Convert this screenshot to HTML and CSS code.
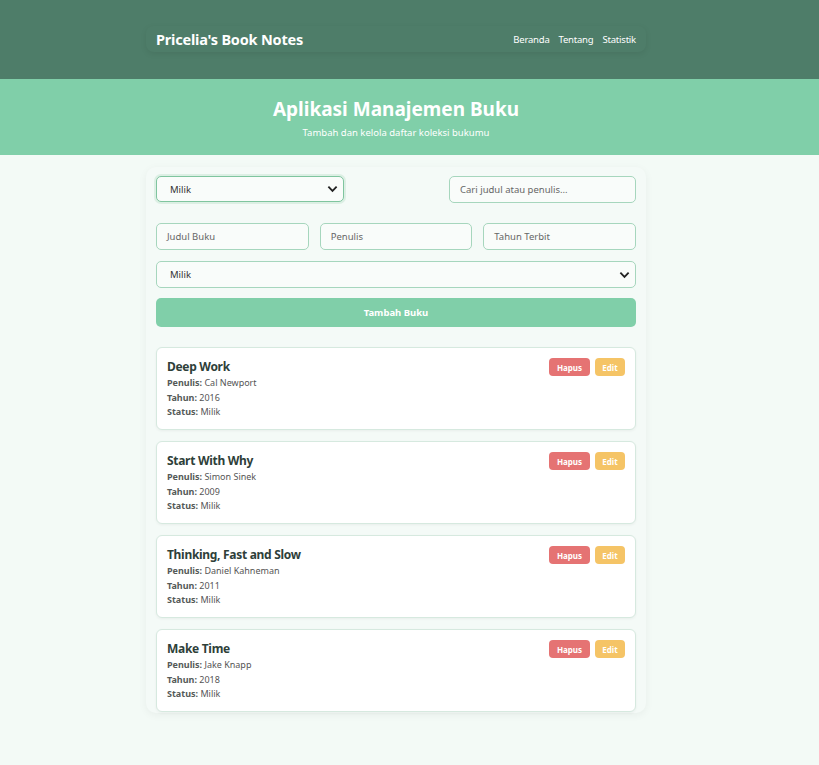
FILE: index.html
```html
<!DOCTYPE html>
<html lang="id">
<head>
<meta charset="utf-8">
<title>Pricelia's Book Notes</title>
<link rel="stylesheet" href="styles.css">
</head>
<body>
<header class="topbar">
  <div class="wrap">
    <nav class="nav">
      <span class="brand">Pricelia's Book Notes</span>
      <div class="links">
        <a href="#">Beranda</a>
        <a href="#">Tentang</a>
        <a href="#">Statistik</a>
      </div>
    </nav>
  </div>
</header>
<section class="hero">
  <h1>Aplikasi Manajemen Buku</h1>
  <p>Tambah dan kelola daftar koleksi bukumu</p>
</section>
<main class="wrap">
  <div class="panel">
    <div class="filters">
      <div class="select focus">Milik<svg viewBox="0 0 12 8" class="chev"><path d="M1.5 1.5 6 6l4.5-4.5" fill="none" stroke="#222" stroke-width="2"/></svg></div>
      <div class="input search">Cari judul atau penulis...</div>
    </div>
    <div class="form-row">
      <div class="input">Judul Buku</div>
      <div class="input">Penulis</div>
      <div class="input">Tahun Terbit</div>
    </div>
    <div class="select full">Milik<svg viewBox="0 0 12 8" class="chev"><path d="M1.5 1.5 6 6l4.5-4.5" fill="none" stroke="#222" stroke-width="2"/></svg></div>
    <button class="add">Tambah Buku</button>
    <div class="list">
      <div class="card">
        <div class="info">
          <h3>Deep Work</h3>
          <p><b>Penulis:</b> Cal Newport</p>
          <p><b>Tahun:</b> 2016</p>
          <p><b>Status:</b> Milik</p>
        </div>
        <div class="actions"><span class="btn del">Hapus</span><span class="btn edit">Edit</span></div>
      </div>
      <div class="card">
        <div class="info">
          <h3>Start With Why</h3>
          <p><b>Penulis:</b> Simon Sinek</p>
          <p><b>Tahun:</b> 2009</p>
          <p><b>Status:</b> Milik</p>
        </div>
        <div class="actions"><span class="btn del">Hapus</span><span class="btn edit">Edit</span></div>
      </div>
      <div class="card">
        <div class="info">
          <h3>Thinking, Fast and Slow</h3>
          <p><b>Penulis:</b> Daniel Kahneman</p>
          <p><b>Tahun:</b> 2011</p>
          <p><b>Status:</b> Milik</p>
        </div>
        <div class="actions"><span class="btn del">Hapus</span><span class="btn edit">Edit</span></div>
      </div>
      <div class="card">
        <div class="info">
          <h3>Make Time</h3>
          <p><b>Penulis:</b> Jake Knapp</p>
          <p><b>Tahun:</b> 2018</p>
          <p><b>Status:</b> Milik</p>
        </div>
        <div class="actions"><span class="btn del">Hapus</span><span class="btn edit">Edit</span></div>
      </div>
    </div>
  </div>
</main>
</body>
</html>
```
FILE: styles.css
```css
* { box-sizing: border-box; }
html, body { margin: 0; }
body {
  background: #f3faf6;
  font-family: "Noto Sans", "Open Sans", sans-serif;
  color: #333;
  padding-right: 27px;
  min-height: 765px;
}
.topbar {
  background: #4e7d69;
  height: 79px;
  padding-top: 26px;
  margin-right: -27px;
  padding-right: 27px;
}
.wrap { width: 500px; margin: 0 auto; }
.nav {
  display: flex;
  justify-content: space-between;
  align-items: center;
  padding: 3px 10px;
  border-radius: 8px;
  box-shadow: 0 2px 6px rgba(0,0,0,0.08);
  height: 26px;
}
.brand { color: #fff; font-weight: 700; font-size: 14.5px; letter-spacing: -0.2px; }
.links { display: flex; gap: 9px; }
.links a { color: #fff; text-decoration: none; font-size: 9.5px; letter-spacing: -0.2px; }
.hero {
  background: #80cfa9;
  height: 76px;
  text-align: center;
  color: #fff;
  padding-top: 16px;
  margin-right: -27px;
  padding-right: 27px;
}
.hero h1 { margin: 0; font-size: 19px; font-weight: 700; line-height: 28px; }
.hero p { margin: 4px 0 0; font-size: 9.5px; line-height: 12px; }
main { padding-top: 12px; }
.panel {
  background: #f4faf7;
  border-radius: 10px;
  box-shadow: 0 2px 8px rgba(0,0,0,0.05);
  padding: 9px 10px 1px;
}
.filters { display: flex; justify-content: space-between; margin-bottom: 20px; }
.select, .input {
  height: 27px;
  border: 1px solid #a6d6bd;
  border-radius: 5px;
  background: #f9fcfa;
  font-size: 9.5px;
  display: flex;
  align-items: center;
  padding: 0 10px;
  color: #666;
}
.select { justify-content: space-between; color: #333; padding: 0 5px 0 13px; }
.select.focus {
  width: 188px;
  height: 26px;
  border-color: #7fc59f;
  box-shadow: 0 0 0 2px #dcefe4;
}
.chev { width: 11px; height: 8px; }
.search { width: 187px; }
.form-row { display: flex; gap: 11px; margin-bottom: 11px; }
.form-row .input { flex: 1; }
.select.full { margin-bottom: 10px; }
.add {
  display: block;
  width: 100%;
  height: 29px;
  border: none;
  border-radius: 5px;
  background: #80cfa9;
  color: #fff;
  font-family: inherit;
  font-weight: 700;
  font-size: 9.5px;
  margin-bottom: 20px;
}
.list { display: flex; flex-direction: column; gap: 11px; }
.card {
  background: #fff;
  border: 1px solid #d6e9df;
  border-radius: 6px;
  height: 83px;
  padding: 10px 10px 0;
  display: flex;
  justify-content: space-between;
  box-shadow: 0 1px 3px rgba(0,0,0,0.05);
}
.info h3 { margin: 0; font-size: 12px; letter-spacing: -0.3px; line-height: 18px; color: #2e4039; }
.info p { margin: 0; font-size: 9px; line-height: 14.5px; color: #555; }
.info b { color: #555a58; font-weight: 700; }
.actions { display: flex; gap: 5px; align-items: flex-start; }
.btn {
  height: 18px;
  border-radius: 4px;
  color: #fff;
  font-size: 8px;
  font-weight: 700;
  display: flex;
  align-items: center;
  justify-content: center;
}
.del { background: #e57373; width: 41px; }
.edit { background: #f5c466; width: 30px; }
```
